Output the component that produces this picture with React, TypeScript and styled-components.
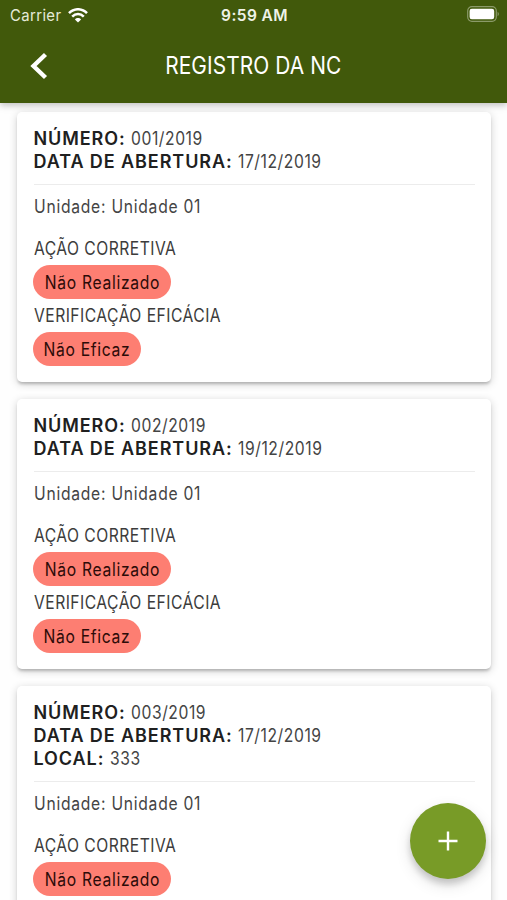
import React from "react";
import styled, { createGlobalStyle } from "styled-components";

const GlobalStyle = createGlobalStyle`
  * { box-sizing: border-box; }
  html, body { margin: 0; height: 100%; overflow: hidden; background: #fff; }
  body { font-family: Inter, "Liberation Sans", sans-serif; }
`;

const Screen = styled.div`
  width: 100%;
  height: 100vh;
  overflow: hidden;
  display: flex;
  flex-direction: column;
  background: #fefefe;
`;

const Header = styled.header`
  flex: none;
  height: 103px;
  background: #41590b;
  color: #fff;
  box-shadow: 0 2px 6px rgba(0, 0, 0, 0.2), 0 5px 8px rgba(0, 0, 0, 0.05);
  z-index: 1;
`;

const StatusBar = styled.div`
  height: 30px;
  padding: 0 8px 0 10px;
  display: grid;
  grid-template-columns: 1fr auto 1fr;
  align-items: center;
`;

const Carrier = styled.div`
  display: flex;
  align-items: center;
  font-size: 16px;
  color: #e5ebd9;
`;

const CarrierName = styled.span`
  width: 58px;
`;

const Clock = styled.div`
  font-size: 15.5px;
  font-weight: 600;
  letter-spacing: 0.4px;
  color: #f0f3e8;
`;

const Battery = styled.svg`
  justify-self: end;
  display: block;
  margin-top: -2px;
`;

const TitleBar = styled.div`
  height: 73px;
  padding: 0 28px 2px;
  display: grid;
  grid-template-columns: 40px 1fr 40px;
  align-items: center;
`;

const BackButton = styled.button`
  border: 0;
  padding: 0;
  background: none;
  color: inherit;
  display: flex;
`;

const Title = styled.h1`
  margin: 0;
  text-align: center;
  font-size: 24px;
  line-height: 30px;
  font-weight: 400;
`;

const Condensed = styled.span<{ $spacing?: number; $scale?: number; $origin?: string }>`
  display: inline-block;
  white-space: nowrap;
  letter-spacing: ${(p) => p.$spacing ?? 0}px;
  transform: scaleX(${(p) => p.$scale ?? 0.87});
  transform-origin: ${(p) => p.$origin ?? "left"} center;
`;

const List = styled.main`
  flex: 1;
  min-height: 0;
  overflow: hidden;
  padding: 9px 16px 0 17px;
  display: flex;
  flex-direction: column;
  gap: 17px;
`;

const Card = styled.article`
  flex: none;
  padding: 15px 16px 10.6px 17px;
  border-radius: 5px;
  background: #fff;
  box-shadow: 0 3px 3px -1px rgba(0, 0, 0, 0.2), 0 2px 8px rgba(0, 0, 0, 0.19);
`;

const Field = styled.div`
  display: flex;
  align-items: center;
  gap: 5.5px;
  height: 23px;
  margin-left: -0.5px;
`;

const FieldName = styled.strong`
  font-size: 18px;
  font-weight: 600;
  letter-spacing: 0.92px;
  color: #202020;
`;

const FieldValue = styled.span`
  font-size: 18px;
  color: #444;
`;

const Divider = styled.hr`
  margin: 11px 0 0;
  border: 0;
  height: 1px;
  background: #ececec;
`;

const Unit = styled.p`
  margin: 10px 0 19px -0.5px;
  font-size: 18px;
  line-height: 23px;
  color: #444;
`;

const Stage = styled.section`
  height: 67.25px;
`;

const StageName = styled.div`
  height: 28px;
  margin-left: -0.5px;
  font-size: 18px;
  line-height: 23px;
  color: #3c3c3c;
`;

const Chip = styled.span<{ $width: number }>`
  display: flex;
  align-items: center;
  justify-content: center;
  width: ${(p) => p.$width}px;
  height: 34px;
  margin-left: -1px;
  border-radius: 17px;
  background: #fd7e72;
  color: #2c0b08;
  font-size: 18px;
`;

const AddButton = styled.button`
  position: fixed;
  right: 21.5px;
  bottom: 21.5px;
  width: 76px;
  height: 76px;
  padding: 0;
  border: 0;
  border-radius: 50%;
  background: #789b27;
  color: #fff;
  display: flex;
  align-items: center;
  justify-content: center;
  box-shadow: 0 5px 7px rgba(0, 0, 0, 0.17), 0 6px 16px rgba(0, 0, 0, 0.12);
  z-index: 2;
`;

type Entry = { numero: string; abertura: string; local?: string; unidade: string };

const entries: Entry[] = [
  { numero: "001/2019", abertura: "17/12/2019", unidade: "Unidade 01" },
  { numero: "002/2019", abertura: "19/12/2019", unidade: "Unidade 01" },
  { numero: "003/2019", abertura: "17/12/2019", local: "333", unidade: "Unidade 01" },
];

function EntryField({ name, value }: { name: string; value: string }) {
  return (
    <Field>
      <FieldName>{name}:</FieldName>
      <FieldValue><Condensed $spacing={0.65}>{value}</Condensed></FieldValue>
    </Field>
  );
}

function EntryCard({ entry }: { entry: Entry }) {
  return (
    <Card>
      <EntryField name="NÚMERO" value={entry.numero} />
      <EntryField name="DATA DE ABERTURA" value={entry.abertura} />
      {entry.local && <EntryField name="LOCAL" value={entry.local} />}
      <Divider />
      <Unit><Condensed $spacing={0.85}>Unidade: {entry.unidade}</Condensed></Unit>
      <Stage>
        <StageName><Condensed $spacing={0.53}>AÇÃO CORRETIVA</Condensed></StageName>
        <Chip $width={138}><Condensed $spacing={0.82} $origin="center">Não Realizado</Condensed></Chip>
      </Stage>
      {!entry.local && (
        <Stage>
          <StageName><Condensed $spacing={0.53}>VERIFICAÇÃO EFICÁCIA</Condensed></StageName>
          <Chip $width={108}><Condensed $spacing={0.8} $origin="center">Não Eficaz</Condensed></Chip>
        </Stage>
      )}
    </Card>
  );
}

export default function App() {
  return (
    <Screen>
      <GlobalStyle />
      <Header>
        <StatusBar>
          <Carrier>
            <CarrierName><Condensed $spacing={0.4} $scale={0.93}>Carrier</Condensed></CarrierName>
            <svg width="20" height="15" viewBox="0 0 20 15" fill="none" stroke="#fff" strokeWidth="2.5">
              <path d="M1 5.2C6-.1 14-.1 19 5.2" />
              <path d="M4.2 8.6C7.6 5.1 12.4 5.1 15.8 8.6" />
              <path d="M10 14.6 6.9 11.4C8.6 9.6 11.4 9.6 13.1 11.4Z" fill="#fff" stroke="none" />
            </svg>
          </Carrier>
          <Clock>9:59 AM</Clock>
          <Battery width="32" height="16" viewBox="0 0 32 16">
            <rect x="0.7" y="0.7" width="28.6" height="14.6" rx="4.2" fill="none" stroke="#8b9a69" strokeWidth="1.2" />
            <rect x="2.6" y="2.8" width="24.6" height="10.4" rx="2.2" fill="#fff" />
            <path d="M30.6 5.8c1.6.8 1.6 3.6 0 4.4z" fill="#8b9a69" />
          </Battery>
        </StatusBar>
        <TitleBar>
          <BackButton aria-label="Voltar">
            <svg width="22" height="30" viewBox="0 0 22 30" fill="none" stroke="#fff" strokeWidth="4.4">
              <path d="M17.5 3.5 5.5 15l12 11.5" />
            </svg>
          </BackButton>
          <Title><Condensed $spacing={0.1} $origin="center">REGISTRO DA NC</Condensed></Title>
        </TitleBar>
      </Header>
      <List>
        {entries.map((entry) => <EntryCard key={entry.numero} entry={entry} />)}
      </List>
      <AddButton aria-label="Adicionar">
        <svg width="20" height="20" viewBox="0 0 20 20" stroke="#fff" strokeWidth="2.4">
          <path d="M10 .5v19M.5 10h19" />
        </svg>
      </AddButton>
    </Screen>
  );
}
